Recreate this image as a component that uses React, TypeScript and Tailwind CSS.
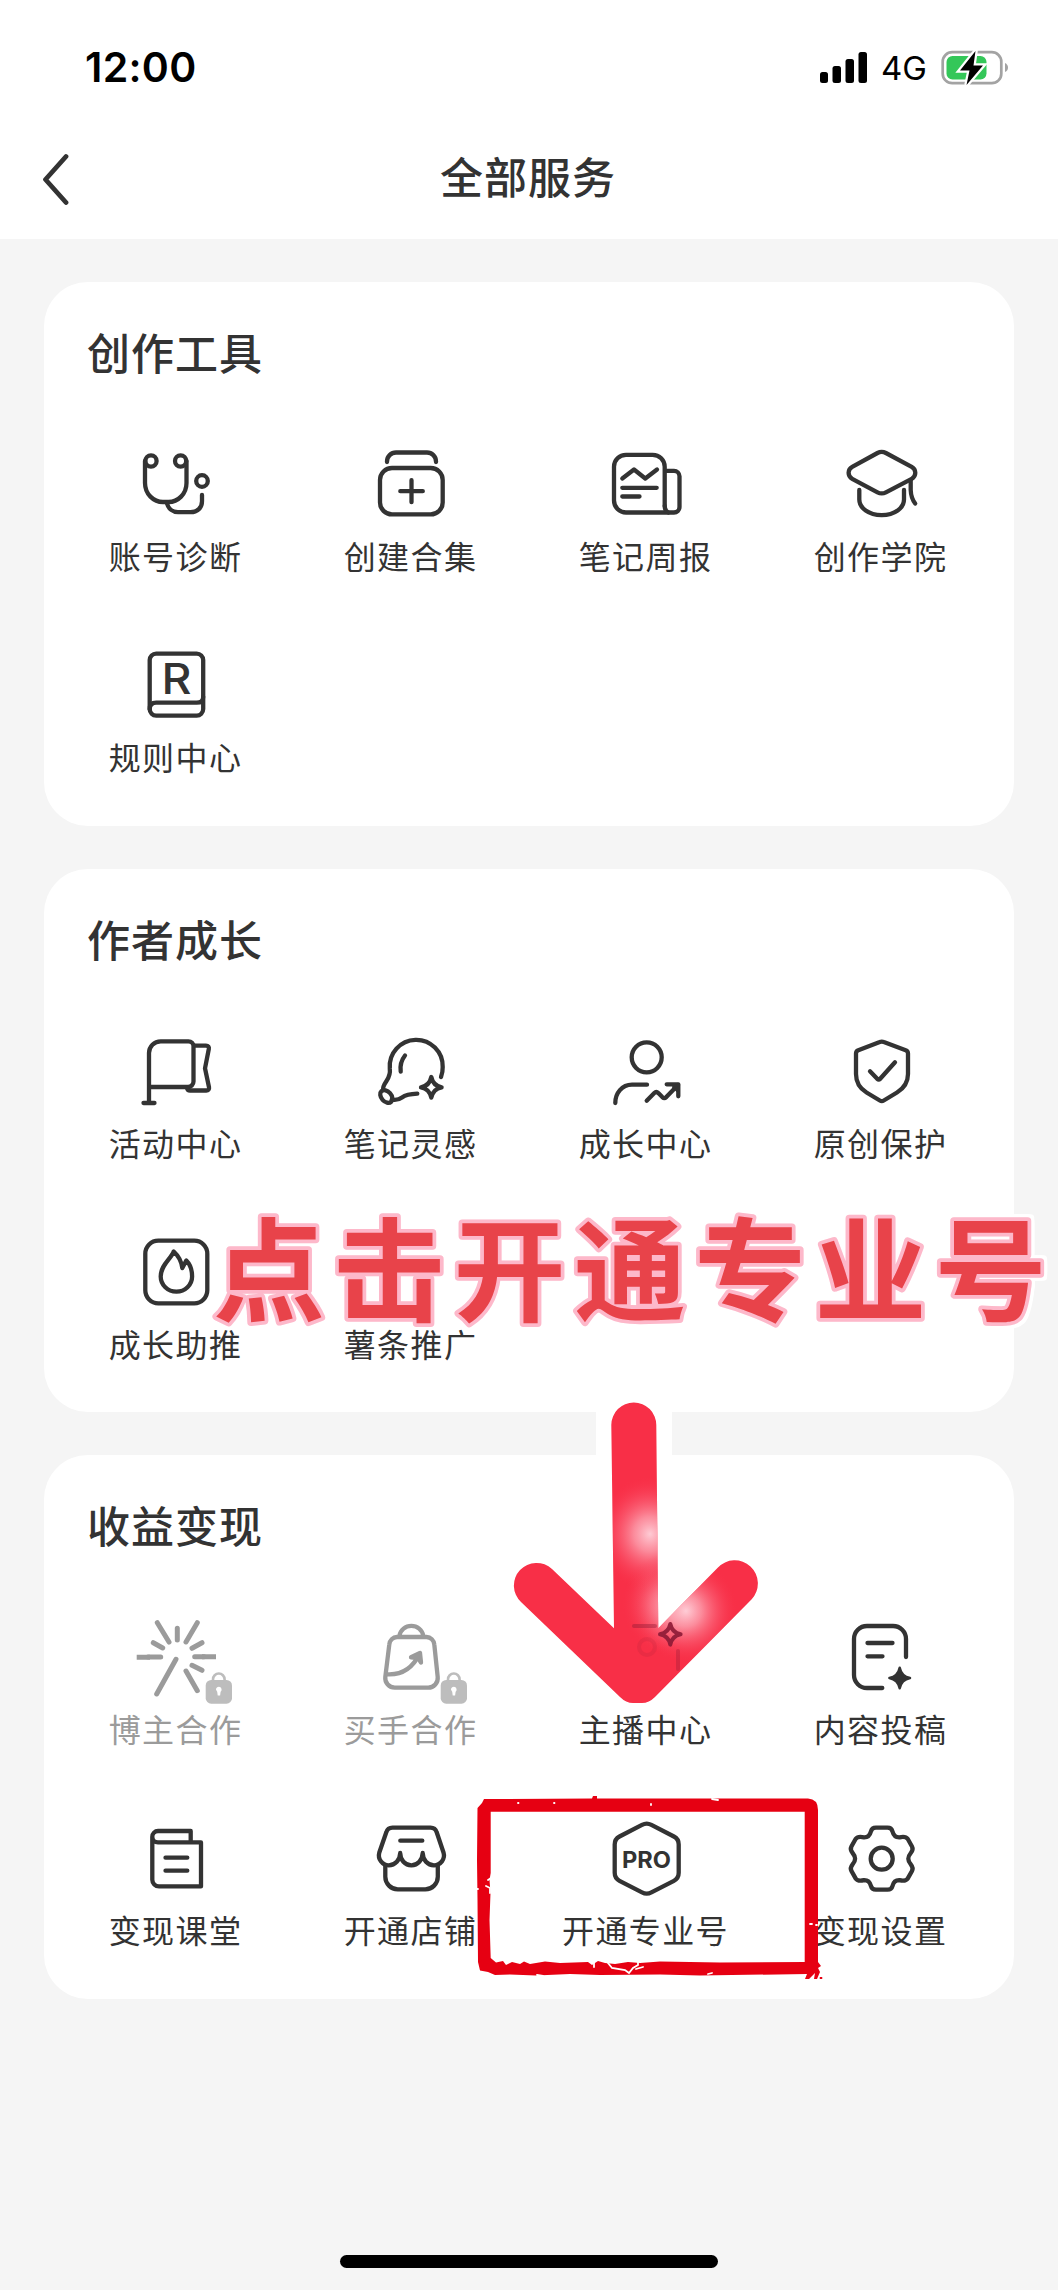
import type { ReactNode } from "react";
import clsx from "clsx";

type Service = {
  label: string;
  icon?: ReactNode;
  locked?: boolean;
};

const spark = "q1.7 8.6 10.3 10.3q-8.6 1.7-10.3 10.3q-1.7-8.6-10.3-10.3q8.6-1.7 10.3-10.3z";

const creationTools: Service[] = [
  {
    label: "账号诊断",
    icon: (
      <>
        <circle cx="15" cy="17" r="5.6" />
        <circle cx="44.600" cy="17" r="5.600" />
        <path d="M9 17v22c0 11 8.500 19 18 19h5.500c9.500 0 18-8 18-19V17" />
        <path d="M31 59.500c1.500 5.500 6 8.700 11 8.700h12.500c7 0 11.500-4.500 11.500-11V51" />
        <circle cx="66" cy="37" r="5.800" />
      </>
    ),
  },
  {
    label: "创建合集",
    icon: (
      <>
        <path d="M16 18v-.5a9 9 0 0 1 9-9h31a9 9 0 0 1 9 9v.5" />
        <rect x="9" y="24" width="62.700" height="46.400" rx="12" />
        <path d="M29.300 47.200h22.500M40.500 36.200v22" />
      </>
    ),
  },
  {
    label: "笔记周报",
    icon: (
      <>
        <path d="M58.700 62V22.800a12 12 0 0 0-12-12H20a12 12 0 0 0-12 12v33.700a12 12 0 0 0 12 12h48a5.500 5.500 0 0 0 5.500-5.500V32.300a5.500 5.500 0 0 0-5.500-5.500h-9.300" />
        <path d="M58.700 62q0 4.500 3.500 6.500" />
        <path d="M16.300 34.500 28 25.500l11.300 9 11.700-9M16.300 43.800h34.400M16.300 52.500H33.500" />
      </>
    ),
  },
  {
    label: "创作学院",
    icon: (
      <>
        <path d="M36.500 9 11.200 22.800a6.800 6.800 0 0 0 0 12L36.500 48.300a9 9 0 0 0 8.400 0L70.700 34.800a6.800 6.800 0 0 0 0-12L44.900 9a9 9 0 0 0-8.400 0z" />
        <path d="M18.300 46v9.500c0 8.500 9.500 15.600 22.400 15.600S63 64 63 55.500V46" />
        <path d="M69.700 36v10q.3 8 4.500 13.500" />
      </>
    ),
  },
  {
    label: "规则中心",
    icon: (
      <>
        <rect x="13.700" y="8.600" width="53.500" height="62" rx="6.500" />
        <path d="M13.700 64.500q0-6.800 6.500-6.800h40.500q6.500 0 6.500-6" />
        <text
          x="25.500"
          y="49"
          textLength="30"
          lengthAdjust="spacingAndGlyphs"
          fill="currentColor"
          stroke="none"
          className="font-[Inter] text-[42px] font-medium"
        >
          R
        </text>
      </>
    ),
  },
];

const authorGrowth: Service[] = [
  {
    label: "活动中心",
    icon: (
      <>
        <path d="M13 71V22a11.700 11.700 0 0 1 11.700-11.700H52.500a5 5 0 0 1 5 5V50.500a5.500 5.500 0 0 1-5.500 5.500H13" />
        <path d="M7.500 72h11" />
        <path d="M59 14.700h11q3.500 0 2.800 3.300L69 37.300l4 19q.6 3.200-2.800 3.200H54q-2.500 0-3-2.500" />
      </>
    ),
  },
  {
    label: "笔记灵感",
    icon: (
      <>
        <path d="M70 46a27 27 0 0 0 1.700-10A26.500 26.500 0 1 0 18.800 37.500q.8 6.500-3.300 12.500t-3.300 9" />
        <path d="M20.700 68.600q5.800 1.200 10.300-2.100t15.300-3.800" />
        <ellipse cx="15.300" cy="65.500" rx="7.200" ry="5" transform="rotate(48 15.300 65.500)" />
        <path d="M34 24.500q-5.500 7-4.300 16" />
        <path d={`M60.300 46${spark}`} />
      </>
    ),
  },
  {
    label: "成长中心",
    icon: (
      <>
        <circle cx="40.700" cy="26.300" r="15" />
        <path d="M9.300 72c0-10 6.700-18.300 16.700-18.300h15" />
        <path d="m40.700 69.700 7.600-7.600q2-2 4 0l4 4q2 1.800 4 0L72 54" />
        <path d="M60.700 53.300h11.600v12" />
        <path d="M67 56h4v4z" fill="currentColor" strokeWidth="2" />
      </>
    ),
  },
  {
    label: "原创保护",
    icon: (
      <>
        <path d="M38.800 11 17.300 19.300a3.500 3.500 0 0 0-2.300 3.300V43c0 8.500 4 14.500 10.500 18.500L38.800 69.500a4 4 0 0 0 4 0L56 61.500C62.500 57.500 67 51.500 67 43V22.600a3.500 3.500 0 0 0-2.300-3.300L42.800 11a5 5 0 0 0-4 0z" />
        <path d="m29 40.300 7.200 7.500q1.500 1.300 3 0L54 31.300" />
      </>
    ),
  },
  {
    label: "成长助推",
    icon: (
      <>
        <rect x="9.300" y="8.700" width="62" height="62.600" rx="13" />
        <path d="M37.700 19.500C35 27 24.700 33 24.700 44.500a15.700 15.200 0 0 0 31.400 0c0-6-1.800-12-5.800-16l-4 7.500C45.500 29.500 41.500 23 37.700 19.500z" />
      </>
    ),
  },
  { label: "薯条推广" },
];

const monetization: Service[] = [
  {
    label: "博主合作",
    locked: true,
    icon: (
      <g strokeWidth="5">
        <path d="M21.300 5.700 33 25M41.300 11.300V23M61.300 5.700 50 25M17.300 25.700l9.400 5.300M66 25.700l-10 5.600M40 42.300 20.700 77M56 48.300l10 5M50 54l11.300 19.700M12 40h12.700M68 39.800h-9.300" />
        <path d="M.7 40.200H14M80 39.800H66" strokeLinecap="butt" />
      </g>
    ),
  },
  {
    label: "买手合作",
    locked: true,
    icon: (
      <>
        <path d="M26 20h29.500a8 8 0 0 1 7.800 7.500L66.700 60a9.600 9.600 0 0 1-9.600 10.700H24A9.600 9.600 0 0 1 14.300 60l4-32.500A8 8 0 0 1 26 20z" />
        <path d="M28.500 18.500a12 11.500 0 0 1 23.700 0" />
        <path d="M16.300 57.300Q38 58.500 48.500 37" />
        <path d="M40 40.300 49 36l1 9.500-3-4.500z" fill="currentColor" />
      </>
    ),
  },
  { label: "主播中心" },
  {
    label: "内容投稿",
    icon: (
      <>
        <path d="M65 40V22A13 13 0 0 0 52 9H26a13 13 0 0 0-13 13v36a13 13 0 0 0 13 13h15.300" />
        <path d="M26.500 26h25M26.500 39.300h15" />
        <path d={`M58.700 50.700${spark}`} fill="currentColor" strokeWidth="2.500" />
      </>
    ),
  },
  {
    label: "变现课堂",
    icon: (
      <>
        <path d="M54.700 24V13H22a5.700 5.700 0 0 0 0 11.400h43v44H23a6.700 6.700 0 0 1-6.700-6.700V18.700" />
        <path d="M29.500 39.700h21.800M29.500 52.700h21.800" />
      </>
    ),
  },
  {
    label: "开通店铺",
    icon: (
      <>
        <path d="M21.500 9.700h38a6.500 6.500 0 0 1 6.200 4.600L72.500 34.500c2 6.500-3 12.800-9.500 12.800S51.900 42 51.700 35c-.3 7-4.800 12.300-11.300 12.300S29.300 42 29.200 35c-.2 7-5 12.300-11.500 12.300S6.500 41 8.300 34.500l7-20.200a6.500 6.500 0 0 1 6.200-4.600z" />
        <path d="M29.300 22.700h22" />
        <path d="M14.300 47.500v11.300a12.500 12.500 0 0 0 12.500 12.500h27.500a12.500 12.500 0 0 0 12.500-12.500V47.500" />
      </>
    ),
  },
  {
    label: "开通专业号",
    icon: (
      <>
        <path d="M36 6.800 13.500 18.500a9 9 0 0 0-4.800 8v28.300a9 9 0 0 0 4.800 8L36 74.300a10 10 0 0 0 9.400 0l22.500-11.500a9 9 0 0 0 4.800-8V26.500a9 9 0 0 0-4.800-8L45.400 6.800a10 10 0 0 0-9.400 0z" />
        <text
          x="16"
          y="49.500"
          textLength="49"
          lengthAdjust="spacingAndGlyphs"
          fill="currentColor"
          stroke="none"
          className="font-[Inter] text-[23px] font-bold"
        >
          PRO
        </text>
      </>
    ),
  },
  {
    label: "变现设置",
    icon: (
      <>
        <path d="M34.900 9.700H46.500Q50.500 9.700 51.500 13.500Q53 19.500 58.500 19.300Q64.500 17.800 66.800 21L71 28.500Q72.600 31.500 69.800 35Q67.300 38 67.300 40.700Q67.300 43.400 69.800 46.400Q72.600 49.900 71 52.900L66.800 60.400Q64.500 63.600 58.500 62.100Q53 61.900 51.500 67.900Q50.500 71.700 46.500 71.700H34.900Q30.900 71.700 29.900 67.900Q28.400 61.900 22.900 62.100Q16.900 63.600 14.600 60.400L10.400 52.900Q8.800 49.900 11.600 46.400Q14.100 43.400 14.100 40.700Q14.100 38 11.600 35Q8.800 31.500 10.400 28.500L14.600 21Q16.900 17.800 22.900 19.300Q28.400 19.500 29.900 13.500Q30.900 9.700 34.900 9.700Z" />
        <circle cx="40.700" cy="40.700" r="11" />
      </>
    ),
  },
];

const Lock = () => (
  <g stroke="none">
    <path d="M77 66v-3.500a5.800 6 0 0 1 11.600 0V66" fill="none" stroke="#bdbdbd" strokeWidth="2.600" />
    <rect x="69.700" y="63" width="26.300" height="23.700" rx="5.500" fill="#bdbdbd" />
    <path d="M80 72.800a2.800 2.800 0 1 1 4.600 2l-.5 3.700h-2.400l-.5-3.700z" fill="#fff" />
  </g>
);

const ServiceItem = ({ label, icon, locked }: Service) => (
  <li
    className={clsx(
      "flex flex-col items-center",
      locked ? "text-[#9b9b9b]" : "text-[#333]",
    )}
  >
    <svg
      viewBox="0 0 80 80"
      fill="none"
      stroke="currentColor"
      strokeWidth="4.300"
      strokeLinecap="round"
      strokeLinejoin="round"
      className="size-20 overflow-visible"
    >
      {icon}
      {locked && <Lock />}
    </svg>
    <span className="mt-[11px] text-[32px] leading-10 tracking-[1.400px] whitespace-nowrap">
      {label}
    </span>
  </li>
);

const ServiceCard = ({ title, services }: { title: string; services: Service[] }) => (
  <section className="h-[543.500px] rounded-[44px] bg-white px-[14px] pt-[47px]">
    <h2 className="pl-[29px] text-[43px] leading-[44px] tracking-[1px] font-medium text-[#333]">
      {title}
    </h2>
    <ul className="mt-[71px] grid grid-cols-[repeat(4,235px)] gap-y-[70px]">
      {services.map((service) => (
        <ServiceItem key={service.label} {...service} />
      ))}
    </ul>
  </section>
);

const StatusBar = () => (
  <div className="flex h-[115px] items-center pt-[20px] pl-[85px] pr-[49px] font-[Inter] text-black">
    <span className="text-[41px] font-semibold tracking-[.3px]">12:00</span>
    <svg viewBox="0 0 48 32" className="ml-auto h-8 w-12">
      <rect x="0" y="20" width="8" height="11" rx="2.500" />
      <rect x="12.500" y="14" width="8.500" height="17" rx="2.500" />
      <rect x="25.500" y="7" width="8.500" height="24" rx="2.500" />
      <rect x="38.500" y="0" width="8.500" height="31" rx="2.500" />
    </svg>
    <span className="mt-[2px] ml-[13px] w-[47px] text-[33px]">4G</span>
    <svg viewBox="0 0 68 36" className="ml-[13px] h-9 w-[68px]">
      <rect x="1.700" y="2.200" width="58.600" height="31" rx="9.500" fill="#fff" stroke="#a3a3a3" strokeWidth="2.700" />
      <path d="M64 13q3 1.500 3 4.500t-3 4.500z" fill="#a3a3a3" />
      <rect x="5.500" y="6" width="40" height="23.500" rx="6" fill="#34c759" />
      <path d="M34.500 1 19 20.500h9.500L25.500 35 42 15.500h-9.500z" stroke="#fff" strokeWidth="4.500" paintOrder="stroke" />
    </svg>
  </div>
);

// hand-drawn arrow pointing to the pro account entry
const Arrow = () => (
  <svg viewBox="500 1390 270 330" className="absolute top-[1390px] left-[500px] h-[330px] w-[270px]">
    <defs>
      <radialGradient id="glow">
        <stop offset="0" stopColor="#ffd3dc" stopOpacity=".95" />
        <stop offset=".3" stopColor="#fdb3c0" stopOpacity=".7" />
        <stop offset=".65" stopColor="#fb7287" stopOpacity=".35" />
        <stop offset="1" stopColor="#f93048" stopOpacity="0" />
      </radialGradient>
      <clipPath id="arrow">
        <path d="M611.300 1425a22.500 22.500 0 0 1 45 0L658.300 1628.300 717.700 1567.700a22.700 22.700 0 0 1 34 31.500L655 1697q-6 6-13 6h-9q-7 0-13-6L521 1602a22.500 22.500 0 0 1 31-33L614 1628.300z" />
      </clipPath>
    </defs>
    <rect x="596" y="1395" width="76" height="90" fill="#fff" />
    <g clipPath="url(#arrow)">
      <rect x="500" y="1390" width="270" height="330" fill="#f82f47" />
      <ellipse cx="650" cy="1534" rx="54" ry="58" fill="url(#glow)" />
      <ellipse cx="664" cy="1604" rx="42" ry="50" fill="url(#glow)" opacity=".7" />
      <ellipse cx="686" cy="1611" rx="52" ry="52" fill="url(#glow)" />
      <g fill="none" stroke="#8c1a35" strokeWidth="4" strokeLinecap="round">
        <path d={`M670.300 1624${spark}`} strokeLinejoin="round" opacity=".9" />
        <path d="M634 1626h21" opacity=".4" />
        <circle cx="647" cy="1647" r="8" opacity=".12" />
        <path d="M678 1651v18" opacity=".3" />
      </g>
    </g>
  </svg>
);

// red stamp frame with worn edges
const StampFrame = () => (
  <svg viewBox="465 1785 365 200" className="absolute top-[1785px] left-[465px] h-[200px] w-[365px]">
    <path
      fill="#e60012"
      fillRule="evenodd"
      d="M484 1799L592 1798.500 593 1796H597V1798.500H808Q818 1799 818 1810V1962L821 1966 818 1968 820 1972 817 1979H814L815 1973 809 1979H805L807 1974 700 1975.500 660 1974.500 600 1975 570 1974 536 1975.500 510 1974.500 495 1975 488 1972 480 1970.500 478 1962 477.500 1900 477 1860 477.500 1808 482 1803ZM490.700 1811.700V1873L489.500 1880 490.500 1893 489.500 1920 490.700 1958 496 1962.500 503 1961 506 1965 512 1962 520 1964 524 1961.500 530 1964 545 1961.500 560 1963 588 1962 592 1965 598 1961 605 1963 615 1964 628 1962 640 1963 660 1961.500 720 1962.500 804.700 1962V1811.700Z"
    />
    <g stroke="#fff" strokeWidth="1.800" fill="none" strokeLinecap="round">
      <path d="M608 1963l4 5 13 2 4 3 4-5 5-3v-3M636 1969l7-2M594 1962v5M477 1889h1M486 1886l4 2v5M488 1880l3-2M810 1924h2M816 1925h1M651 1804v1M518 1803h.5M554 1803h.5M712 1799l6 1M708 1974l4-1M537 1975l6 1" />
    </g>
    <path d="M821 1977v2" stroke="#e60012" strokeWidth="2.500" />
  </svg>
);

export default function App() {
  return (
    <main className="relative flex h-[2290px] w-[1058px] flex-col overflow-hidden bg-[#f5f5f5] font-['Noto_Sans_CJK_SC',sans-serif]">
      <header className="h-[239px] shrink-0 bg-white">
        <StatusBar />
        <div className="flex h-[124px] items-center px-[40px]">
          <svg viewBox="0 0 32 52" fill="none" stroke="#333" className="mt-1 h-[52px] w-8">
            <path d="M26 3.500 5.500 26.500 26 49.500" strokeWidth="4.800" strokeLinecap="round" strokeLinejoin="round" />
          </svg>
          <h1 className="-mt-[4px] flex-1 pr-[34px] text-center text-[43px] leading-[44px] tracking-[1px] font-medium text-[#333]">
            全部服务
          </h1>
        </div>
      </header>

      <div className="flex flex-col gap-[43px] px-[44px] pt-[43px]">
        <ServiceCard title="创作工具" services={creationTools} />
        <ServiceCard title="作者成长" services={authorGrowth} />
        <ServiceCard title="收益变现" services={monetization} />
      </div>

      <div className="mx-auto mt-auto mb-[22px] h-[13px] w-[378px] shrink-0 rounded-full bg-black" />

      {/* callout */}
      <svg className="absolute top-[1190px] left-[200px] h-[150px] w-[858px] overflow-visible [filter:drop-shadow(3px_0_0_#fff)_drop-shadow(-3px_0_0_#fff)_drop-shadow(0_3px_0_#fff)_drop-shadow(0_-3px_0_#fff)]">
        <text
          x="13"
          y="122.500"
          fill="#e8434a"
          stroke="#fdb8ca"
          strokeWidth="7.500"
          strokeLinejoin="round"
          paintOrder="stroke"
          className="text-[112px] font-bold tracking-[8.300px]"
        >
          点击开通专业号
        </text>
      </svg>
      <Arrow />
      <StampFrame />
    </main>
  );
}
